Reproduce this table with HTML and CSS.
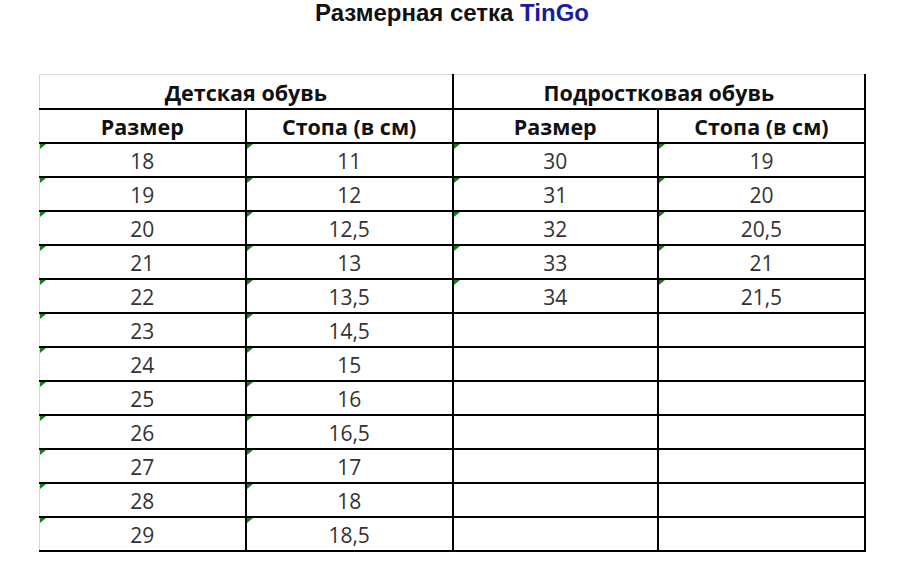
FILE: index.html
```html
<!DOCTYPE html>
<html lang="ru">
<head>
<meta charset="utf-8">
<title>Размерная сетка TinGo</title>
<link rel="stylesheet" href="styles.css">
</head>
<body>
<div class="page">
  <h1 class="title">Размерная сетка <span class="brand">TinGo</span></h1>
  <table class="grid">
    <colgroup>
      <col class="c1"><col class="c2"><col class="c3"><col class="c4">
    </colgroup>
    <thead>
      <tr class="group">
        <th colspan="2" class="first">Детская обувь</th>
        <th colspan="2" class="last">Подростковая обувь</th>
      </tr>
      <tr class="heads">
        <th class="first">Размер</th><th>Стопа (в см)</th><th>Размер</th><th class="last">Стопа (в см)</th>
      </tr>
    </thead>
    <tbody>
      <tr><td class="m first">18</td><td class="m">11</td><td class="m">30</td><td class="m last">19</td></tr>
      <tr><td class="m first">19</td><td class="m">12</td><td class="m">31</td><td class="m last">20</td></tr>
      <tr><td class="m first">20</td><td class="m">12,5</td><td class="m">32</td><td class="m last">20,5</td></tr>
      <tr><td class="m first">21</td><td class="m">13</td><td class="m">33</td><td class="m last">21</td></tr>
      <tr><td class="m first">22</td><td class="m">13,5</td><td class="m">34</td><td class="m last">21,5</td></tr>
      <tr><td class="m first">23</td><td class="m">14,5</td><td></td><td class="last"></td></tr>
      <tr><td class="m first">24</td><td class="m">15</td><td></td><td class="last"></td></tr>
      <tr><td class="m first">25</td><td class="m">16</td><td></td><td class="last"></td></tr>
      <tr><td class="m first">26</td><td class="m">16,5</td><td></td><td class="last"></td></tr>
      <tr><td class="m first">27</td><td class="m">17</td><td></td><td class="last"></td></tr>
      <tr><td class="m first">28</td><td class="m">18</td><td></td><td class="last"></td></tr>
      <tr class="end"><td class="m first">29</td><td class="m">18,5</td><td></td><td class="last"></td></tr>
    </tbody>
  </table>
</div>
</body>
</html>
```

FILE: styles.css
```css
html, body {
  margin: 0;
  padding: 0;
  background: #ffffff;
}

.page {
  width: 826px;
  margin-left: 39px;
  padding-top: 0;
}

.title {
  margin: 0;
  height: 74px;
  font-family: "Liberation Sans", Arial, sans-serif;
  font-weight: bold;
  font-size: 24px;
  line-height: 26px;
  text-align: center;
  color: #111111;
}

.brand {
  color: #1b1b9e;
}

.grid {
  border-collapse: collapse;
  table-layout: fixed;
  width: 827px;
  font-family: "Open Sans", "Noto Sans", sans-serif;
  font-size: 21px;
}

.c1 { width: 206px; }
.c2 { width: 207px; }
.c3 { width: 205px; }
.c4 { width: 207px; }

.grid th,
.grid td {
  height: 34px;
  box-sizing: border-box;
  padding: 3px 0 0 0;
  text-align: center;
  vertical-align: middle;
  border: 2px solid #000000;
  line-height: 26px;
}

.grid th {
  font-weight: bold;
  font-size: 21.5px;
  color: #111111;
}

.grid td {
  color: #333333;
  position: relative;
}

.grid .group th {
  border-top: 1px solid #d6d6d6;
}

.grid .first {
  border-left: 1px solid #d6d6d6;
}

.grid .m::before {
  content: "";
  position: absolute;
  left: 0;
  top: 0;
  width: 0;
  height: 0;
  border-top: 5px solid #1f7a1f;
  border-right: 6px solid transparent;
}
```
